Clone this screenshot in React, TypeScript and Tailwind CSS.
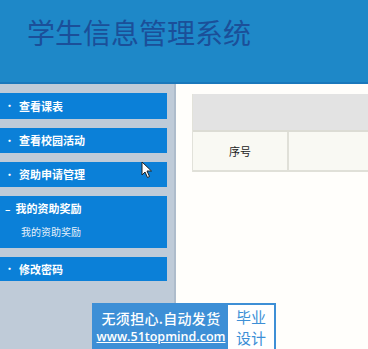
import React from "react";

// ── Student info admin shell: header, blue side menu, empty table.

const cn = '"Noto Sans CJK SC", "Microsoft YaHei", sans-serif';

const menu = [
  { label: "查看课表", h: "h-[26px]" },
  { label: "查看校园活动", h: "h-[25px]" },
  { label: "资助申请管理", h: "h-[25px]" },
];

const MenuItem = ({ label, h }: { label: string; h: string }) => (
  <div className={`${h} flex items-center bg-[#0b80d8] pl-[5px] text-[11px] font-bold text-white`}>
    <span className="mr-[5px] text-[9px]">•</span>
    {label}
  </div>
);

export default function App() {
  return (
    <div className="relative h-[349px] w-[368px] overflow-hidden bg-white" style={{ fontFamily: cn }}>
      <header className="h-[84px] border-b-2 border-[#1a78bb] bg-[#1e88c8] pl-[27px] pt-[16px]">
        <h1 className="text-[28px] leading-[32px] font-normal text-[#1b4f99]">学生信息管理系统</h1>
      </header>

      <div className="flex h-[265px]">
        <aside className="flex w-[176px] flex-col gap-[9px] border-r-2 border-[#aebccb] bg-[#bfcbd8] pr-[7px] pt-[9px]">
          {menu.map((m) => (
            <MenuItem key={m.label} {...m} />
          ))}
          <div className="bg-[#0b80d8] text-white">
            <div className="flex h-[25px] items-center pl-[5px] text-[11px] font-bold">
              <span className="mr-[5px] text-[10px]">–</span>
              我的资助奖励
            </div>
            <div className="flex h-[27px] items-start pl-[21px] pt-[3px] text-[10px] text-[#e6f1fb]">我的资助奖励</div>
          </div>
          <MenuItem label="修改密码" h="h-[24px]" />
        </aside>

        <main className="flex-1 bg-[#fffefb] pl-[16px] pt-[10px]">
          <div className="border-l border-[#e2e2da]">
            <div className="h-[38px] border-b-2 border-[#dcdcd4] bg-[#e3e3e3]" />
            <div className="flex h-[40px] border-b-2 border-[#e0e0d8] bg-[#f9f9f3]">
              <div className="flex w-[96px] items-center justify-center border-r-2 border-[#e0e0d8] text-[11px] text-[#222]">序号</div>
              <div className="flex-1" />
            </div>
          </div>
        </main>
      </div>

      {/* mouse cursor */}
      <svg className="absolute left-[141px] top-[161px]" width="12" height="18" viewBox="0 0 12 18">
        <path d="M1 1 L1 14 L4 11 L6.5 16.5 L8.5 15.5 L6 10 L10.5 10 Z" fill="white" stroke="#222" strokeWidth="1" />
      </svg>

      {/* watermark */}
      <div className="absolute left-[92px] top-[303px] flex h-[50px] w-[184px] border-2 border-[#3d8fd6] bg-[#3d8fd6]">
        <div className="flex w-[134px] flex-col items-center pt-[3px] text-white">
          <div className="text-[14px] leading-[20px] font-medium tracking-[0.3px]">无须担心.自动发货</div>
          <div className="text-[12.5px] leading-[18px] font-semibold underline" style={{ fontFamily: '"Open Sans", sans-serif' }}>
            www.51topmind.com
          </div>
        </div>
        <div className="flex flex-1 flex-col items-center bg-white pt-[1px] text-[15px] leading-[21px] text-[#3d8fd6]">
          <span>毕业</span>
          <span>设计</span>
        </div>
      </div>
    </div>
  );
}
